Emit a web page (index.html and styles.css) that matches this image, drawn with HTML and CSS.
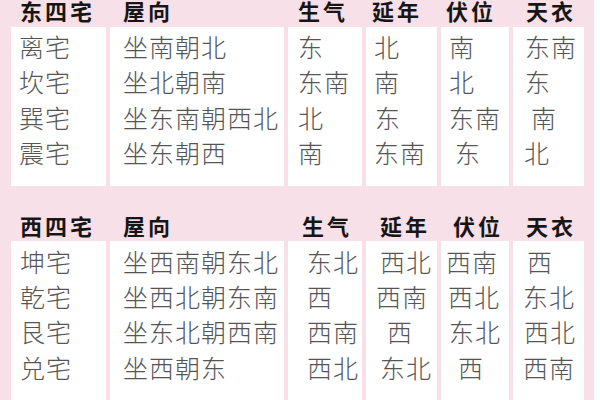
FILE: index.html
```html
<!DOCTYPE html>
<html lang="zh-CN">
<head>
<meta charset="utf-8">
<title>东四宅 西四宅</title>
<link rel="stylesheet" href="styles.css">
</head>
<body>
<div class="page">
  <section class="sec sec1">
    <div class="hd c1 hp9">东四宅</div>
    <div class="hd c2 hp13">屋向</div>
    <div class="hd c3 hp10">生气</div>
    <div class="hd c4 hp6">延年</div>
    <div class="hd c5 hp5">伏位</div>
    <div class="hd c6 hp13">天衣</div>

    <div class="cell p8"><div>离宅</div><div>坎宅</div><div>巽宅</div><div>震宅</div></div>
    <div class="cell p13"><div>坐南朝北</div><div>坐北朝南</div><div>坐东南朝西北</div><div>坐东朝西</div></div>
    <div class="cell p10"><div>东</div><div>东南</div><div>北</div><div>南</div></div>
    <div class="cell p8"><div>北</div><div>南</div><div class="s1">东</div><div>东南</div></div>
    <div class="cell p8"><div>南</div><div>北</div><div>东南</div><div class="s6">东</div></div>
    <div class="cell p12"><div>东南</div><div>东</div><div class="s6">南</div><div class="sm1">北</div></div>
  </section>

  <section class="sec sec2">
    <div class="hd c1 hp9">西四宅</div>
    <div class="hd c2 hp13">屋向</div>
    <div class="hd c3 hp14">生气</div>
    <div class="hd c4 hp14">延年</div>
    <div class="hd c5 hp12">伏位</div>
    <div class="hd c6 hp13">天衣</div>

    <div class="cell p9"><div>坤宅</div><div>乾宅</div><div>艮宅</div><div>兑宅</div></div>
    <div class="cell p13"><div>坐西南朝东北</div><div>坐西北朝东南</div><div>坐东北朝西南</div><div>坐西朝东</div></div>
    <div class="cell p19"><div>东北</div><div>西</div><div>西南</div><div>西北</div></div>
    <div class="cell p14"><div>西北</div><div class="sm4">西南</div><div class="s7">西</div><div>东北</div></div>
    <div class="cell p5"><div>西南</div><div class="s2">西北</div><div class="s3">东北</div><div class="s12">西</div></div>
    <div class="cell p10"><div class="s4">西</div><div>东北</div><div class="s1">西北</div><div>西南</div></div>
  </section>
</div>
</body>
</html>
```

FILE: styles.css
```css
html, body {
  margin: 0;
  padding: 0;
  background: #ffffff;
}

body {
  width: 600px;
  height: 400px;
  overflow: hidden;
}

.page {
  width: 594px;
  height: 400px;
  background: #f7e0e8;
  overflow: hidden;
  font-family: "Noto Sans CJK SC", "Noto Sans", sans-serif;
}

.sec {
  display: grid;
  grid-template-columns: 95px 174px 74px 71px 68px 71px;
  column-gap: 4px;
  margin-left: 11px;
}

.sec2 {
  padding-top: 29px;
}

.hd {
  font-weight: 700;
  font-size: 22px;
  line-height: 21px;
  letter-spacing: 3px;
  color: #161616;
  padding-bottom: 6px;
  white-space: nowrap;
}

.sec2 .hd {
  padding-bottom: 5px;
}

.cell {
  background: #ffffff;
  font-size: 25px;
  font-weight: 300;
  line-height: 35.4px;
  letter-spacing: 1px;
  color: #555555;
  padding-top: 2px;
  padding-bottom: 15px;
  white-space: nowrap;
}

.sec2 .cell {
  padding-top: 3px;
  padding-bottom: 40px;
}

.hp5 { padding-left: 5px; }
.hp6 { padding-left: 6px; }
.hp9 { padding-left: 9px; }
.hp10 { padding-left: 10px; }
.hp12 { padding-left: 12px; }
.hp13 { padding-left: 13px; }
.hp14 { padding-left: 14px; }

.p5 { padding-left: 5px; }
.p8 { padding-left: 8px; }
.p9 { padding-left: 9px; }
.p10 { padding-left: 10px; }
.p12 { padding-left: 12px; }
.p13 { padding-left: 13px; }
.p14 { padding-left: 14px; }
.p19 { padding-left: 19px; }

.s1 { margin-left: 1px; }
.s2 { margin-left: 2px; }
.s3 { margin-left: 3px; }
.s4 { margin-left: 4px; }
.s6 { margin-left: 6px; }
.s7 { margin-left: 7px; }
.s12 { margin-left: 12px; }
.sm1 { margin-left: -1px; }
.sm4 { margin-left: -4px; }
```
